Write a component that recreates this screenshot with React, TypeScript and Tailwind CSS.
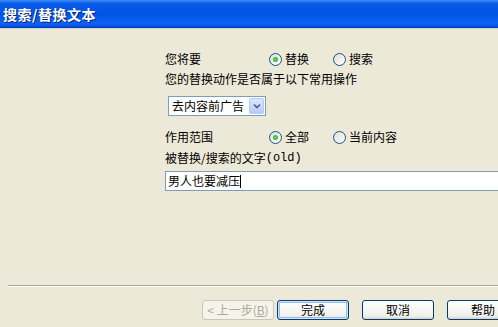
import React from 'react';

const Radio: React.FC<{ checked?: boolean; label: string }> = ({ checked, label }) => (
    <div className="flex items-center">
        <span className="w-[13px] h-[13px] rounded-full border border-[#1C5180] bg-[linear-gradient(135deg,#DCDCD7,#FFFFFF)] flex items-center justify-center">
            {checked && <span className="w-[5px] h-[5px] rounded-full bg-[radial-gradient(circle,#6CD66C,#21A121)]" />}
        </span>
        <span className="ml-[3px]">{label}</span>
    </div>
);

const XpButton: React.FC<{ children: React.ReactNode; primary?: boolean; disabled?: boolean; className?: string }> = ({
    children,
    primary,
    disabled,
    className,
}) => (
    <div
        className={
            'w-[72px] h-[20px] shrink-0 rounded-[3px] border flex items-center justify-center ' +
            (disabled
                ? 'border-[#C9C7BA] bg-[#F5F4EA] text-[#ACA899] '
                : primary
                  ? 'border-[#003C74] bg-[linear-gradient(to_bottom,#FFFFFF,#F0F0EA_85%,#D6D0C5)] shadow-[inset_0_0_0_1px_#CEE7FF,inset_0_0_0_2px_#98B8EA] text-black '
                  : 'border-[#003C74] bg-[linear-gradient(to_bottom,#FFFFFF,#F0F0EA_85%,#D6D0C5)] text-black ') +
            (className ?? '')
        }
    >
        {children}
    </div>
);

export default function App() {
    return (
        <div className="w-[498px] h-[327px] overflow-hidden bg-[#ECE9D8] flex flex-col text-[12px] leading-none text-black font-['Noto_Sans_CJK_SC','Noto_Sans',sans-serif]">
            {/* title bar */}
            <div className="h-[28px] shrink-0 flex items-center pl-[3px] bg-[linear-gradient(to_bottom,#3D8EF7_0%,#0A5BE8_12%,#0055E5_50%,#0D62F5_85%,#0040C8_100%)]">
                <span className="text-white font-bold text-[14px] tracking-[0.5px] [text-shadow:1px_1px_0_#0A1E6E]">搜索/替换文本</span>
            </div>
            <div className="h-px shrink-0 bg-[#D4D0C8]" />

            {/* form */}
            <div className="flex-1 overflow-hidden pl-[165px] pt-[20px]">
                <div className="h-[20px] flex items-center">
                    <span className="w-[104px]">您将要</span>
                    <Radio checked label="替换" />
                    <div className="w-[24px]" />
                    <Radio label="搜索" />
                </div>
                <div className="h-[20px] flex items-center">您的替换动作是否属于以下常用操作</div>
                <div className="mt-[7px] ml-[3px] w-[98px] h-[20px] border border-[#7F9DB9] bg-white flex items-center">
                    <span className="flex-1 pl-[3px]">去内容前广告</span>
                    <span className="w-[15px] h-[16px] mr-px rounded-[2px] border border-[#B6C9F5] bg-[linear-gradient(to_bottom,#DCE6FD,#B7CBF8)] flex items-center justify-center">
                        <svg width="8" height="6" viewBox="0 0 8 6">
                            <path d="M1 1.5 L4 4.5 L7 1.5" fill="none" stroke="#4D6185" strokeWidth="1.6" />
                        </svg>
                    </span>
                </div>
                <div className="mt-[11px] h-[20px] flex items-center">
                    <span className="w-[104px]">作用范围</span>
                    <Radio checked label="全部" />
                    <div className="w-[24px]" />
                    <Radio label="当前内容" />
                </div>
                <div className="mt-px h-[20px] flex items-center">
                    被替换/搜索的文字<span className="font-['Liberation_Mono',monospace]">(old)</span>
                </div>
                <div className="mt-[3px] w-[400px] h-[20px] border border-[#7F9DB9] bg-white flex items-center pl-[2px]">
                    <span>男人也要减压</span>
                    <span className="w-px h-[13px] bg-black" />
                </div>
            </div>

            {/* footer */}
            <div className="shrink-0 ml-[8px] h-px bg-[#ACA899]" />
            <div className="shrink-0 ml-[8px] h-px bg-white" />
            <div className="shrink-0 pt-[13px] pb-[7px] pl-[202px] flex">
                <XpButton disabled className="w-[71px]">
                    &lt; 上一步(<span className="underline">B</span>)
                </XpButton>
                <XpButton primary className="ml-[3px]">完成</XpButton>
                <XpButton className="ml-[13px]">取消</XpButton>
                <XpButton className="ml-[13px]">帮助</XpButton>
            </div>
        </div>
    );
}
